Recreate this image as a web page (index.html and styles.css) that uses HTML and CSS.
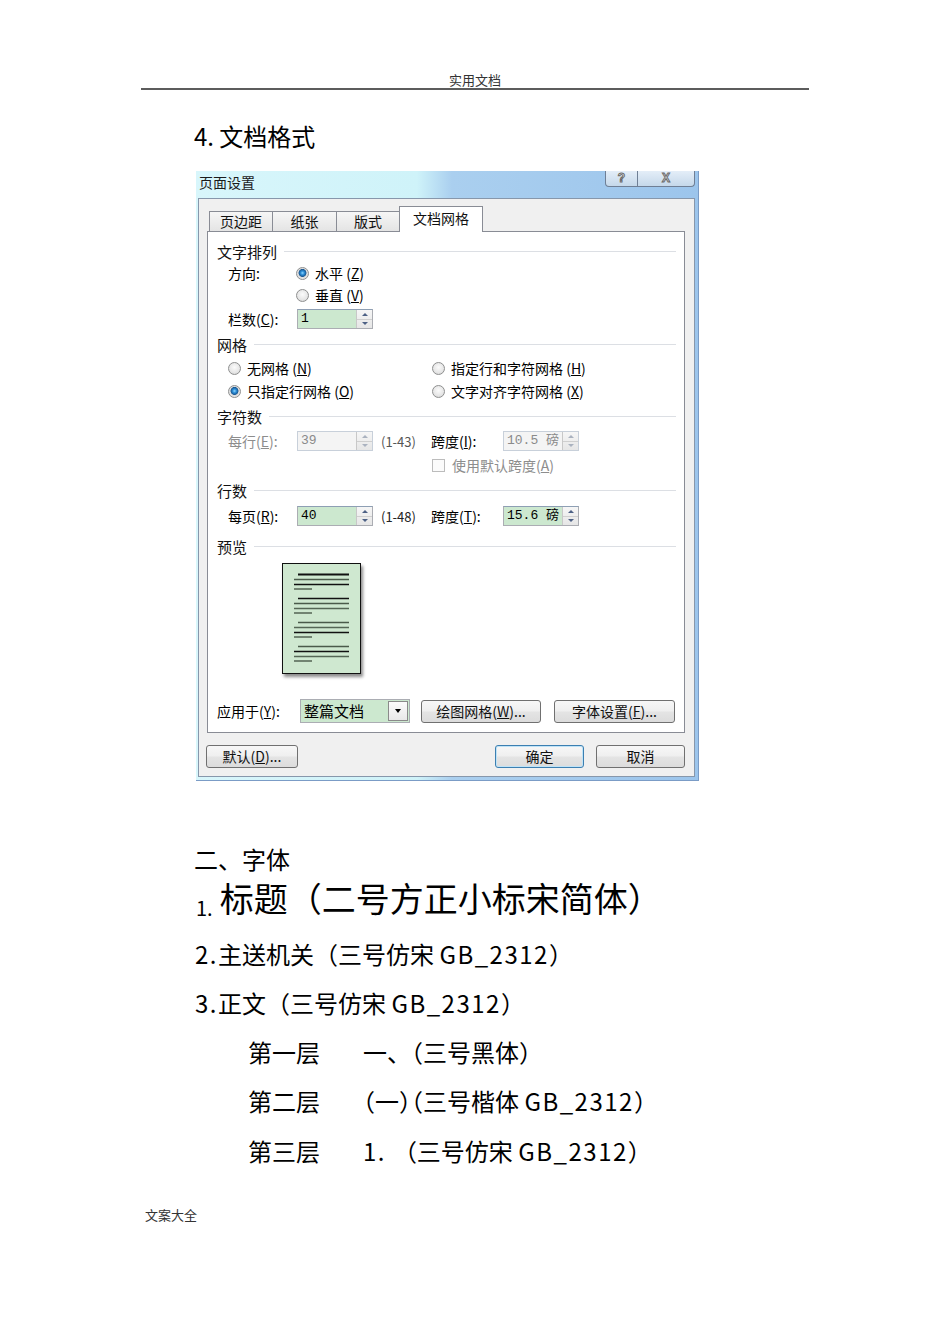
FILE: index.html
```html
<!DOCTYPE html>
<html lang="zh-CN">
<head>
<meta charset="utf-8">
<title>文档格式</title>
<link rel="stylesheet" href="styles.css">
</head>
<body>
<div class="page">
  <header class="running-head">实用文档</header>
  <h2 class="sec-title">4. 文档格式</h2>

  <div class="dialog">
    <div class="titlebar">
      <span class="title">页面设置</span>
      <div class="caption-btns">
        <span class="cap-btn help">?</span>
        <span class="cap-btn close">X</span>
      </div>
    </div>
    <div class="client">
      <div class="tabs">
        <span class="tab t1">页边距</span>
        <span class="tab t2">纸张</span>
        <span class="tab t3">版式</span>
        <span class="tab active">文档网格</span>
      </div>
      <div class="panel">
        <div class="grp h22"><span>文字排列</span><i class="rule"></i></div>
        <div class="row h22 ind"><span class="lbl">方向:</span><span class="radio on"></span><span class="rtxt">水平 (<u>Z</u>)</span></div>
        <div class="row h22 ind"><span class="lbl"></span><span class="radio"></span><span class="rtxt">垂直 (<u>V</u>)</span></div>
        <div class="row h26 ind"><span class="lbl">栏数(<u>C</u>):</span>
          <span class="spin green w75"><span class="val">1</span><span class="arrows"><i class="up"></i><i class="dn"></i></span></span>
        </div>
        <div class="grp h25"><span>网格</span><i class="rule"></i></div>
        <div class="row h22 ind">
          <span class="col"><span class="radio"></span><span class="rtxt">无网格 (<u>N</u>)</span></span>
          <span class="col"><span class="radio"></span><span class="rtxt">指定行和字符网格 (<u>H</u>)</span></span>
        </div>
        <div class="row h24 ind">
          <span class="col"><span class="radio on"></span><span class="rtxt">只指定行网格 (<u>O</u>)</span></span>
          <span class="col"><span class="radio"></span><span class="rtxt">文字对齐字符网格 (<u>X</u>)</span></span>
        </div>
        <div class="grp h26"><span>字符数</span><i class="rule"></i></div>
        <div class="row h24 ind">
          <span class="lbl dis">每行(<u>E</u>):</span>
          <span class="spin disabled w75"><span class="val">39</span><span class="arrows"><i class="up"></i><i class="dn"></i></span></span>
          <span class="range mid">(1-43)</span>
          <span class="lbl2">跨度(<u>I</u>):</span>
          <span class="spin disabled w75"><span class="val">10.5 磅</span><span class="arrows"><i class="up"></i><i class="dn"></i></span></span>
        </div>
        <div class="row h24 ind">
          <span class="check"></span><span class="ctxt dis">使用默认跨度(<u>A</u>)</span>
        </div>
        <div class="grp h26"><span>行数</span><i class="rule"></i></div>
        <div class="row h26 ind">
          <span class="lbl">每页(<u>R</u>):</span>
          <span class="spin green w75"><span class="val">40</span><span class="arrows"><i class="up"></i><i class="dn"></i></span></span>
          <span class="range">(1-48)</span>
          <span class="lbl2">跨度(<u>T</u>):</span>
          <span class="spin green w75"><span class="val">15.6 磅</span><span class="arrows"><i class="up"></i><i class="dn"></i></span></span>
        </div>
        <div class="grp h34"><span>预览</span><i class="rule"></i></div>
        <div class="preview">
          <div class="preview-page">
            <svg width="77" height="108" viewBox="0 0 77 108">
              <g stroke-width="1.4">
                <line x1="15" y1="10.5" x2="66" y2="10.5" stroke="#111" stroke-width="2"/>
                <line x1="11" y1="15.5" x2="66" y2="15.5" stroke="#4a5a4a"/>
                <line x1="11" y1="20.5" x2="66" y2="20.5" stroke="#111"/>
                <line x1="11" y1="25" x2="29" y2="25" stroke="#4a5a4a"/>
                <line x1="15" y1="34.5" x2="66" y2="34.5" stroke="#111"/>
                <line x1="11" y1="39.5" x2="66" y2="39.5" stroke="#4a5a4a"/>
                <line x1="11" y1="44.5" x2="66" y2="44.5" stroke="#556655"/>
                <line x1="11" y1="49" x2="29" y2="49" stroke="#4a5a4a"/>
                <line x1="15" y1="58.5" x2="66" y2="58.5" stroke="#4a5a4a"/>
                <line x1="11" y1="63.5" x2="66" y2="63.5" stroke="#556655"/>
                <line x1="11" y1="68.5" x2="66" y2="68.5" stroke="#111"/>
                <line x1="11" y1="73" x2="29" y2="73" stroke="#4a5a4a"/>
                <line x1="15" y1="82.5" x2="66" y2="82.5" stroke="#4a5a4a"/>
                <line x1="11" y1="87.5" x2="66" y2="87.5" stroke="#111"/>
                <line x1="11" y1="92.5" x2="66" y2="92.5" stroke="#556655"/>
                <line x1="11" y1="97" x2="29" y2="97" stroke="#4a5a4a"/>
              </g>
            </svg>
          </div>
        </div>
        <div class="row apply">
          <span class="lbl3">应用于(<u>Y</u>):</span>
          <span class="combo"><span class="val">整篇文档</span><span class="drop"><i></i></span></span>
          <span class="btn b-grid">绘图网格(<u>W</u>)...</span>
          <span class="btn b-font">字体设置(<u>F</u>)...</span>
        </div>
      </div>
      <div class="bottom-btns">
        <span class="btn b-def">默认(<u>D</u>)...</span>
        <span class="btn b-ok">确定</span>
        <span class="btn b-cancel">取消</span>
      </div>
    </div>
  </div>

  <p class="h-font">二、字体</p>
  <p class="title-line"><span class="num">1.</span>标题（二号方正小标宋简体）</p>
  <p class="line first"><span class="lat">2.</span>主送机关（三号仿宋 <span class="lat">GB_2312</span>）</p>
  <p class="line"><span class="lat">3.</span>正文（三号仿宋 <span class="lat">GB_2312</span>）</p>
  <div class="layer l49"><span class="layer-name">第一层</span><span>一、（三号黑体）</span></div>
  <div class="layer"><span class="layer-name">第二层</span><span><span class="halt">（一）</span>（三号楷体 <span class="lat">GB_2312</span>）</span></div>
  <div class="layer"><span class="layer-name">第三层</span><span><span class="lat">1. </span>（三号仿宋 <span class="lat">GB_2312</span>）</span></div>

  <footer class="footer">文案大全</footer>
</div>
</body>
</html>
```

FILE: styles.css
```css
* { box-sizing: border-box; }

body {
  margin: 0;
  background: #fff;
  color: #000;
  font-family: "Noto Sans CJK SC", "Noto Sans", sans-serif;
}

.page {
  width: 950px;
  min-height: 1344px;
  overflow: hidden;
}

.running-head {
  margin: 0 141px;
  padding-top: 71px;
  font-size: 13px;
  line-height: 17px;
  text-align: center;
  color: #333;
  border-bottom: 2px solid #5c5c5c;
}

.sec-title {
  margin: 31px 0 0 194px;
  font-size: 24px;
  line-height: 30px;
  font-weight: 400;
}

/* ---------- dialog ---------- */
.dialog {
  margin: 20px 0 0 196px;
  width: 503px;
  height: 610px;
  padding: 0 3px 3px 2px;
  display: flex;
  flex-direction: column;
  background: linear-gradient(90deg, #d8f6fb 0%, #cff3f9 44%, #aacfef 51%, #9cc5ec 100%);
  border-right: 1px solid #7b9cc6;
  border-bottom: 1px solid #7b9cc6;
}

.titlebar {
  height: 27px;
  display: flex;
  align-items: flex-start;
  flex-shrink: 0;
}

.title {
  font-size: 14px;
  line-height: 18px;
  padding: 2px 0 0 1px;
  color: #1a1a1a;
}

.caption-btns {
  margin-left: auto;
  display: flex;
  height: 16px;
}

.cap-btn {
  height: 16px;
  border: 1px solid #6f7f95;
  border-top: none;
  font-family: "Liberation Sans", sans-serif;
  font-weight: bold;
  font-size: 12px;
  line-height: 15px;
  text-align: center;
  color: #f2f5f8;
  -webkit-text-stroke: 1px #6a6a6a;
  background: linear-gradient(#e4eef8, #c5d8ea);
}

.help { width: 33px; border-radius: 0 0 0 4px; }
.close { width: 57px; border-left: none; border-radius: 0 0 4px 0; }

.client {
  flex: 1;
  background: #f0f0f0;
  border: 1px solid #8797ab;
  padding: 8px 9px 0 8px;
  display: flex;
  flex-direction: column;
}

.tabs {
  display: flex;
  align-items: flex-end;
  height: 25px;
  padding-left: 2px;
  margin-bottom: -1px;
  position: relative;
  z-index: 1;
}

.tab {
  height: 21px;
  border: 1px solid #898c95;
  background: linear-gradient(#f6f6f6, #e4e4e4);
  font-size: 14px;
  line-height: 19px;
  text-align: center;
  color: #111;
}

.t1 { width: 64px; }
.t2 { width: 65px; margin-left: -1px; }
.t3 { width: 64px; margin-left: -1px; }

.tab.active {
  width: 84px;
  height: 26px;
  margin-left: -1px;
  border-bottom: none;
  background: #fff;
  line-height: 22px;
}

.panel {
  height: 502px;
  flex-shrink: 0;
  background: #fff;
  border: 1px solid #898c95;
  padding: 8px 8px 9px 9px;
  display: flex;
  flex-direction: column;
  font-size: 14px;
}

.grp {
  display: flex;
  align-items: center;
  font-size: 15px;
  color: #111;
}

.grp .rule {
  flex: 1;
  height: 1px;
  background: #dcdfe4;
  margin-left: 7px;
}

.h22 { height: 22px; }
.h24 { height: 24px; }
.h25 { height: 25px; }
.h26 { height: 26px; }
.h34 { height: 34px; }

.row {
  display: flex;
  align-items: center;
}

.ind { margin-left: 11px; }

.lbl { width: 68px; flex-shrink: 0; }
.lbl2 { width: 71px; flex-shrink: 0; }
.lbl3 { width: 83px; flex-shrink: 0; }
.dis { color: #8d8d8d; }

.col {
  width: 204px;
  display: flex;
  align-items: center;
}

.radio {
  width: 13px;
  height: 13px;
  flex-shrink: 0;
  border-radius: 50%;
  border: 1px solid #8e8f8f;
  background: radial-gradient(circle at 50% 40%, #fbfbfb 0, #e6e6e6 60%, #cfcfcf 100%);
}

.radio.on {
  background: radial-gradient(circle at 50% 45%, #8fd6ff 0, #2d8fd8 1.8px, #1a5994 3.6px, #dcdcdc 4.3px, #f4f4f4 100%);
}

.rtxt { margin-left: 6px; }

.check {
  width: 13px;
  height: 13px;
  margin-left: 204px;
  border: 1px solid #bcbcbc;
  background: #fbfbfb;
}

.ctxt { margin-left: 7px; }

.range {
  width: 50px;
  margin-left: 8px;
  font-size: 13px;
  color: #222;
}

.range.mid { color: #555; }

.spin {
  display: flex;
  height: 20px;
  border: 1px solid #abadb3;
  border-top-color: #8e9fb4;
  flex-shrink: 0;
}

.w75 { width: 76px; }

.spin.green { background: #cce8cf; margin-left: 1px; }
.spin.disabled { background: #f4f4f4; border-color: #c8d0da; color: #8a8a8a; margin-left: 1px; }

.spin .val {
  flex: 1;
  font-family: "Liberation Mono", "Noto Sans CJK SC", monospace;
  font-size: 13px;
  line-height: 18px;
  padding-left: 3px;
  white-space: nowrap;
}

.arrows {
  width: 16px;
  display: flex;
  flex-direction: column;
  border-left: 1px solid #c8c8c8;
  background: linear-gradient(#f6f6f6, #e6e6e6);
}

.arrows i {
  flex: 1;
  display: flex;
  align-items: center;
  justify-content: center;
}

.arrows i + i { border-top: 1px solid #cfcfcf; }

.arrows i::before {
  content: "";
  border-left: 3px solid transparent;
  border-right: 3px solid transparent;
}

.arrows .up::before { border-bottom: 3px solid #4d6185; }
.arrows .dn::before { border-top: 3px solid #4d6185; }
.disabled .arrows .up::before { border-bottom-color: #aab2bf; }
.disabled .arrows .dn::before { border-top-color: #aab2bf; }

.preview {
  padding-left: 65px;
  height: 111px;
}

.preview-page {
  width: 79px;
  height: 111px;
  border: 1px solid #111;
  background: #cfe8d0;
  box-shadow: 2px 3px 3px rgba(0, 0, 0, 0.45);
}

.preview-page svg { display: block; }

.apply {
  margin-top: auto;
  height: 24px;
}

.combo {
  width: 110px;
  height: 24px;
  display: flex;
  border: 1px solid #abadb3;
  background: #cce8cf;
}

.combo .val {
  flex: 1;
  padding-left: 3px;
  font-size: 15px;
  line-height: 21px;
  color: #000;
}

.combo .drop {
  width: 20px;
  margin: 1px;
  border: 1px solid #8a8a8a;
  background: linear-gradient(#fbfbfb, #e8e8e8);
  display: flex;
  align-items: center;
  justify-content: center;
}

.combo .drop i {
  border-left: 3px solid transparent;
  border-right: 3px solid transparent;
  border-top: 4px solid #000;
}

.btn {
  height: 23px;
  border: 1px solid #707070;
  border-radius: 3px;
  background: linear-gradient(#f7f7f7 0%, #efefef 48%, #e4e4e4 52%, #dcdcdc 100%);
  font-size: 14px;
  line-height: 21px;
  text-align: center;
  color: #111;
  white-space: nowrap;
}

.b-grid { width: 120px; margin-left: 11px; }
.b-font { width: 121px; margin-left: 13px; }

.bottom-btns {
  display: flex;
  margin-top: 12px;
}

.b-def { width: 92px; margin-left: -1px; }
.b-ok {
  width: 89px;
  margin-left: auto;
  border-color: #3c7fb1;
  box-shadow: inset 0 0 0 1px #bfe3f7;
}
.b-cancel { width: 89px; margin-left: 12px; }

/* ---------- document text ---------- */
.h-font {
  margin: 63px 0 0 194px;
  font-size: 24px;
  line-height: 30px;
}

.title-line {
  margin: 2px 0 0 196px;
  font-size: 34px;
  line-height: 44px;
  height: 44px;
  white-space: nowrap;
}

.title-line .num {
  font-size: 20px;
  line-height: 0;
  vertical-align: -4px;
  margin-right: 7px;
}

.line {
  margin: 0 0 0 195px;
  font-size: 24px;
  line-height: 49px;
  white-space: nowrap;
}

.line.first { margin-top: 9px; }

.lat { letter-spacing: 1.5px; }

.halt { font-feature-settings: "halt" 1; }

.layer {
  margin-left: 248px;
  display: flex;
  font-size: 24px;
  line-height: 50px;
  white-space: nowrap;
}

.layer.l49 { line-height: 49px; }

.layer-name { width: 115px; flex-shrink: 0; }

.footer {
  margin: 30px 0 0 145px;
  font-size: 13px;
  line-height: 17px;
  color: #333;
}
```
